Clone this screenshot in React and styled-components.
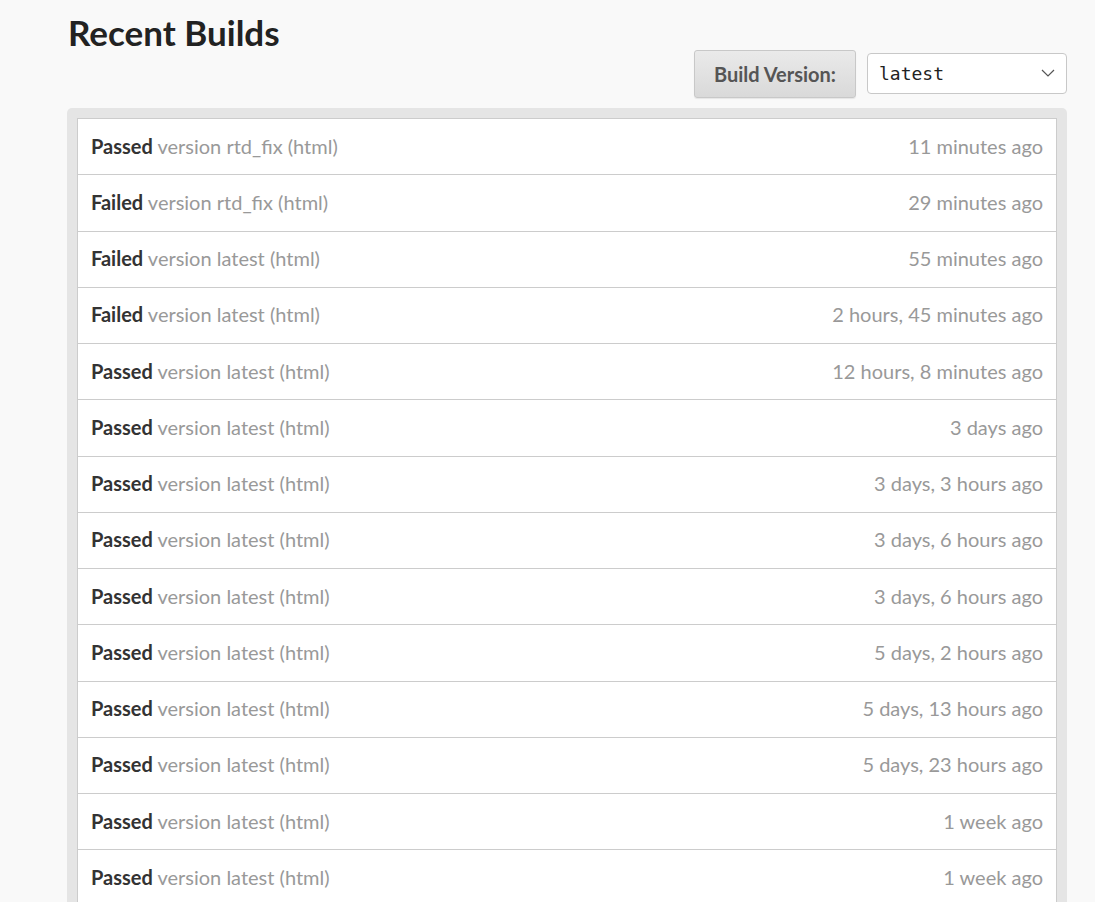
import styled, { createGlobalStyle } from "styled-components"

const GlobalStyle = createGlobalStyle`
    body {
        margin: 0;
        background: #f9f9f9;
        font-family: Lato, "Open Sans", sans-serif;
    }
`

const Page = styled.div`
    width: 1000px;
    margin-left: 67px;
`

const Title = styled.h1`
    margin: 0;
    padding-top: 12px;
    padding-left: 1px;
    font-size: 35px;
    line-height: 40px;
    font-weight: 700;
    color: #222;
`

const Controls = styled.div`
    display: flex;
    justify-content: flex-end;
    align-items: center;
    gap: 11px;
    margin-top: -2px;
    height: 48px;
`

const VersionButton = styled.button`
    height: 48px;
    width: 162px;
    padding: 0 12px 1px;
    border: 1px solid #c8c8c8;
    border-radius: 3px;
    background: linear-gradient(#eaeaea, #d9d9d9);
    box-shadow: 0 1px 1px rgba(0, 0, 0, 0.08);
    font-family: Lato, sans-serif;
    font-size: 20px;
    font-weight: 700;
    color: #555;
`

const SelectBox = styled.div`
    position: relative;
    width: 200px;
    height: 41px;
    margin-top: -1px;
    box-sizing: border-box;
    border: 1px solid #c8c8c8;
    border-radius: 4px;
    background: #fff;
    display: flex;
    align-items: center;
    padding-left: 11px;
    font-family: "DejaVu Sans Mono", "Liberation Mono", monospace;
    font-size: 18px;
    color: #222;
`

const Chevron = styled.svg`
    position: absolute;
    right: 11px;
    top: 14px;
`

const Panel = styled.div`
    margin-top: 10px;
    padding: 10px 10px 0;
    background: #e5e5e5;
    border-radius: 5px 5px 0 0;
`

const List = styled.div`
    border: 1px solid #cccccc;
    border-bottom: none;
    background: #fff;
`

const Row = styled.div`
    display: flex;
    justify-content: space-between;
    align-items: center;
    height: 56.25px;
    box-sizing: border-box;
    padding: 0 13px 2px;
    border-bottom: 1px solid #cccccc;
    font-size: 20px;
    color: #999;
`

const Status = styled.span`
    font-weight: 700;
    color: #333;
`

const Time = styled.span`
    color: #999;
`

const builds = [
    ["Passed", "rtd_fix", "11 minutes ago"],
    ["Failed", "rtd_fix", "29 minutes ago"],
    ["Failed", "latest", "55 minutes ago"],
    ["Failed", "latest", "2 hours, 45 minutes ago"],
    ["Passed", "latest", "12 hours, 8 minutes ago"],
    ["Passed", "latest", "3 days ago"],
    ["Passed", "latest", "3 days, 3 hours ago"],
    ["Passed", "latest", "3 days, 6 hours ago"],
    ["Passed", "latest", "3 days, 6 hours ago"],
    ["Passed", "latest", "5 days, 2 hours ago"],
    ["Passed", "latest", "5 days, 13 hours ago"],
    ["Passed", "latest", "5 days, 23 hours ago"],
    ["Passed", "latest", "1 week ago"],
    ["Passed", "latest", "1 week ago"],
]

const App = () => {
    return (
        <Page>
            <GlobalStyle />
            <Title>Recent Builds</Title>
            <Controls>
                <VersionButton>Build Version:</VersionButton>
                <SelectBox>
                    latest
                    <Chevron width="14" height="10" viewBox="0 0 14 10">
                        <path d="M1 2 L7 8 L13 2" fill="none" stroke="#555" strokeWidth="1.2" />
                    </Chevron>
                </SelectBox>
            </Controls>
            <Panel>
                <List>
                    {builds.map(([status, version, time], i) => (
                        <Row key={i}>
                            <span>
                                <Status>{status}</Status> version {version} (html)
                            </span>
                            <Time>{time}</Time>
                        </Row>
                    ))}
                </List>
            </Panel>
        </Page>
    )
}

export default App
